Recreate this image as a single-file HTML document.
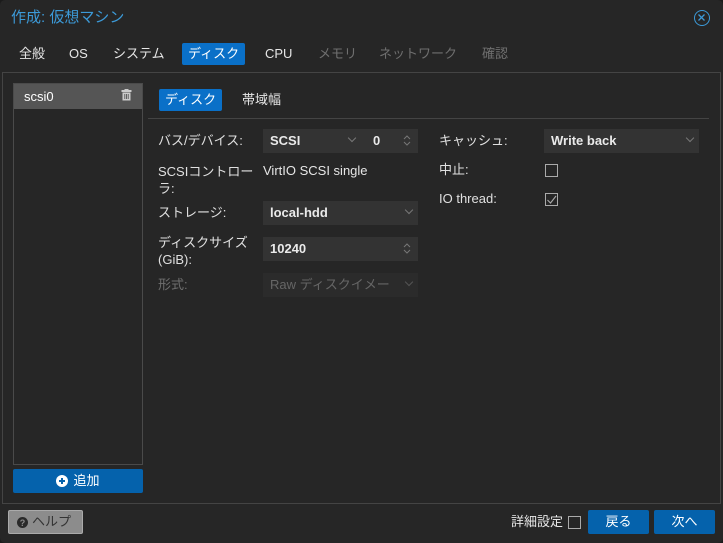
<!DOCTYPE html>
<html><head><meta charset="utf-8"><style>
*{box-sizing:border-box;margin:0;padding:0}
body{width:723px;height:543px;background:#1b1b1b;font-family:"Liberation Sans","Noto Sans CJK JP",sans-serif;color:#e6e6e6;font-size:13px;line-height:16px;position:relative;overflow:hidden}
.win{position:absolute;left:0;top:0;width:723px;height:543px;background:#262626;border-radius:5px}
.a{position:absolute;white-space:nowrap}
.title{left:11px;top:9px;color:#3c9ad8;font-size:15px;line-height:18px}
.close{left:694px;top:10px;width:16px;height:16px;border:1.5px solid #3c9ad8;border-radius:50%}
.tab{top:45px;font-size:13px;line-height:18px;padding:0 6px}
.lbl{color:#e0e0e0}
.dim{color:#6f6f6f}
.act{background:#0a70c8;color:#fff;border-radius:2px}
.panel{left:2px;top:72px;width:719px;height:432px;border:1px solid #444}
.list{left:13px;top:83px;width:130px;height:382px;border:1px solid #4a4a4a}
.sel{left:14px;top:84px;width:128px;height:25px;background:#555;color:#fff;padding:5px 0 0 10px}
.btn{background:#0562ac;color:#fff;border-radius:2px;display:flex;align-items:center;justify-content:center}
.inp{background:#333;height:24px;padding:4px 7px;font-weight:bold;color:#eaeaea}
.chev{position:absolute;right:6px;top:6px;width:6px;height:6px;border-right:1px solid #777;border-bottom:1px solid #777;transform:rotate(45deg)}
.cb{width:13px;height:13px;border:1px solid #aaa}
.spin{position:absolute;right:7px;top:5px}
</style></head><body>
<div class="win">
<div class="a title">作成: 仮想マシン</div>
<div class="a close"><svg width="13" height="13" viewBox="0 0 13 13" style="position:absolute;left:0;top:0"><path d="M3.5 3.5L9.5 9.5M9.5 3.5L3.5 9.5" stroke="#3c9ad8" stroke-width="1.3"/></svg></div>
<div class="a tab" style="left:13px">全般</div>
<div class="a tab" style="left:63px">OS</div>
<div class="a tab" style="left:107px">システム</div>
<div class="a tab act" style="left:182px;top:43px;padding:2px 6px">ディスク</div>
<div class="a tab" style="left:259px">CPU</div>
<div class="a tab dim" style="left:312px">メモリ</div>
<div class="a tab dim" style="left:373px">ネットワーク</div>
<div class="a tab dim" style="left:476px">確認</div>
<div class="a panel"></div>
<div class="a list"></div>
<div class="a sel">scsi0</div>
<svg class="a" style="left:121px;top:89px" width="11" height="12" viewBox="0 0 11 12"><rect x="0.5" y="1" width="10" height="2" fill="#ccc"/><rect x="3.5" y="0" width="4" height="1.5" fill="#ccc"/><path d="M1.5 3.5h8v8h-8z" fill="#ccc"/><path d="M3.8 5v5M5.5 5v5M7.2 5v5" stroke="#555" stroke-width="0.9"/></svg>
<div class="a btn" style="left:13px;top:469px;width:130px;height:24px"><svg width="12" height="12" style="margin-right:5px"><circle cx="6" cy="6" r="6" fill="#fff"/><path d="M6 3v6M3 6h6" stroke="#0562ac" stroke-width="2"/></svg>追加</div>
<div class="a act" style="left:159px;top:89px;padding:3px 6px;line-height:16px">ディスク</div>
<div class="a" style="left:242px;top:92px">帯域幅</div>
<div class="a" style="left:148px;top:118px;width:561px;height:1px;background:#444"></div>
<div class="a lbl" style="left:158px;top:133px">バス/デバイス:</div>
<div class="a inp" style="left:263px;top:129px;width:100px">SCSI<span class="chev" style="right:8px"></span></div>
<div class="a inp" style="left:363px;top:129px;width:55px;padding-left:10px">0<svg class="spin" width="8" height="13"><path d="M1 5l3-3 3 3M1 8l3 3 3-3" stroke="#777" fill="none"/></svg></div>
<div class="a lbl" style="left:158px;top:163px;line-height:17px">SCSIコントロー<br>ラ:</div>
<div class="a" style="left:263px;top:163px">VirtIO SCSI single</div>
<div class="a lbl" style="left:158px;top:205px">ストレージ:</div>
<div class="a inp" style="left:263px;top:201px;width:155px">local-hdd<span class="chev"></span></div>
<div class="a lbl" style="left:158px;top:234px;line-height:17px">ディスクサイズ<br>(GiB):</div>
<div class="a inp" style="left:263px;top:237px;width:155px">10240<svg class="spin" width="8" height="13"><path d="M1 5l3-3 3 3M1 8l3 3 3-3" stroke="#777" fill="none"/></svg></div>
<div class="a lbl dim" style="left:158px;top:277px">形式:</div>
<div class="a inp" style="left:263px;top:273px;width:155px;background:#2b2b2b;color:#666;font-weight:normal">Raw ディスクイメー<span class="chev" style="border-color:#555"></span></div>
<div class="a lbl" style="left:439px;top:133px">キャッシュ:</div>
<div class="a inp" style="left:544px;top:129px;width:155px">Write back<span class="chev"></span></div>
<div class="a lbl" style="left:439px;top:162px">中止:</div>
<div class="a cb" style="left:545px;top:164px"></div>
<div class="a lbl" style="left:439px;top:191px">IO thread:</div>
<div class="a cb" style="left:545px;top:193px"><svg width="11" height="11" style="position:absolute;left:0;top:0"><path d="M1.5 6L4.5 9L10 2" stroke="#aaa" fill="none" stroke-width="1.1"/></svg></div>
<div class="a" style="left:8px;top:510px;width:75px;height:24px;background:#8c8c8c;border:1px solid #aaa;border-radius:2px;color:#333;display:flex;align-items:center;padding-left:8px"><svg width="11" height="11" style="margin-right:4px"><circle cx="5.5" cy="5.5" r="5.5" fill="#2a2a2a"/><text x="5.5" y="9" font-size="9" font-weight="bold" text-anchor="middle" fill="#8c8c8c" font-family="Liberation Sans">?</text></svg>ヘルプ</div>
<div class="a" style="left:511px;top:514px">詳細設定</div>
<div class="a cb" style="left:568px;top:516px"></div>
<div class="a btn" style="left:588px;top:510px;width:61px;height:24px">戻る</div>
<div class="a btn" style="left:654px;top:510px;width:61px;height:24px">次へ</div>
</div>
</body></html>
